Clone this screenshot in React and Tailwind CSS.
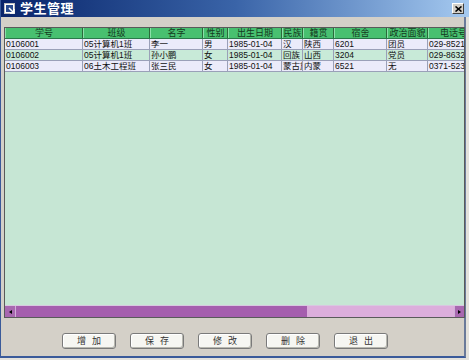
import React from "react";

const cols = [
  { t: "学号", w: 78 },
  { t: "班级", w: 67 },
  { t: "名字", w: 53 },
  { t: "性别", w: 25 },
  { t: "出生日期", w: 54 },
  { t: "民族", w: 21 },
  { t: "籍贯", w: 31 },
  { t: "宿舍", w: 53 },
  { t: "政治面貌", w: 41 },
  { t: "电话号码", w: 60 },
];

const rows = [
  ["0106001", "05计算机1班", "李一", "男", "1985-01-04", "汉", "陕西", "6201", "团员", "029-85214652"],
  ["0106002", "05计算机1班", "孙小鹏", "女", "1985-01-04", "回族", "山西", "3204", "党员", "029-86325412"],
  ["0106003", "06土木工程班", "张三民", "女", "1985-01-04", "蒙古族", "内蒙", "6521", "无", "0371-52364125"],
];

const font = { fontFamily: '"Liberation Sans", "Noto Sans CJK SC", sans-serif' };

function Btn({ children }) {
  return (
    <div className="w-[54px] h-[16px] rounded-[3px] border border-[#7a7a7a] bg-[#f6f6f2] shadow-[inset_-1px_-1px_0_#b8b8b0,inset_1px_1px_0_#ffffff] flex items-center justify-center text-[9px] text-[#333] tracking-[6px] pl-[6px] leading-none">
      {children}
    </div>
  );
}

export default function App() {
  return (
    <div style={font} className="w-[469px] h-[360px] bg-[#e4e2dc] overflow-hidden">
      <div className="w-[466px] h-[358px] bg-[#d4d0c8] border-l border-b-2 border-r-2 border-l-[#3a5a9a] border-b-[#3a5a9a] border-r-[#6a7a9a] flex flex-col">
        <div className="h-[17px] bg-gradient-to-r from-[#0a246a] via-[#3a64a8] to-[#a6caf0] flex items-center pl-[3px] pr-[2px] -mr-[2px] w-[469px]">
          <svg width="12" height="12" viewBox="0 0 12 12" className="mr-[4px]">
            <rect x="0.5" y="0.5" width="10" height="10" fill="#ffffff" stroke="#c0c0c0" />
            <rect x="2" y="2" width="7" height="7" fill="#2a4c90" />
            <path d="M5 5 L10 10 M10 6 L10 10 L6 10" stroke="#ffffff" strokeWidth="1.5" fill="none" />
          </svg>
          <span className="text-white font-bold text-[13px] leading-none tracking-[0.5px]">学生管理</span>
          <div className="ml-auto mr-[4px] w-[12px] h-[11px] bg-[#d4d0c8] border border-t-white border-l-white border-r-[#404040] border-b-[#404040] flex items-center justify-center">
            <svg width="7" height="6" viewBox="0 0 7 6">
              <path d="M0.5 0.5 L6.5 5.5 M6.5 0.5 L0.5 5.5" stroke="#000" strokeWidth="1.6" />
            </svg>
          </div>
        </div>
        <div className="h-[10px]" />
        <div className="ml-[3px] w-[461px] h-[291px] border border-[#5a5a5a] bg-[#c6e6d4] flex flex-col overflow-hidden">
          <div className="flex h-[11px] bg-[#48c070] border-b border-[#2a7a4a] shrink-0">
            {cols.map((c, i) => (
              <div
                key={i}
                style={{ width: c.w }}
                className="shrink-0 border-r border-[#2a6a3a] border-l border-l-[#8ae0a8] text-[9px] leading-[10px] text-[#143a20] text-center overflow-hidden whitespace-nowrap"
              >
                {c.t}
              </div>
            ))}
          </div>
          {rows.map((r, ri) => (
            <div
              key={ri}
              className={`flex h-[11px] shrink-0 border-b border-[#9aa0b8] ${ri % 2 === 1 ? "bg-[#c8ead8]" : "bg-[#ebebfa]"}`}
            >
              {r.map((v, i) => (
                <div
                  key={i}
                  style={{ width: cols[i].w }}
                  className="shrink-0 border-r border-[#9aa0b8] text-[8.5px] leading-[10px] text-[#101010] pl-[1px] overflow-hidden whitespace-nowrap text-clip"
                >
                  {v}
                </div>
              ))}
            </div>
          ))}
          <div className="flex-1" />
          <div className="h-[12px] flex shrink-0 border-t border-[#d8c8e0]">
            <div className="w-[11px] bg-[#a868b0] border-r border-[#d0b0d8] flex items-center justify-center">
              <div className="w-0 h-0 border-t-[2.5px] border-b-[2.5px] border-r-[3px] border-t-transparent border-b-transparent border-r-black" />
            </div>
            <div className="w-[291px] bg-[#a55eae]" />
            <div className="flex-1 bg-[#dcaedc]" />
            <div className="w-[10px] bg-[#a868b0] border-l border-[#d0b0d8] flex items-center justify-center">
              <div className="w-0 h-0 border-t-[2.5px] border-b-[2.5px] border-l-[3px] border-t-transparent border-b-transparent border-l-black" />
            </div>
          </div>
        </div>
        <div className="flex gap-[14px] pl-[61px] mt-[15px]">
          <Btn>增加</Btn>
          <Btn>保存</Btn>
          <Btn>修改</Btn>
          <Btn>删除</Btn>
          <Btn>退出</Btn>
        </div>
      </div>
    </div>
  );
}
